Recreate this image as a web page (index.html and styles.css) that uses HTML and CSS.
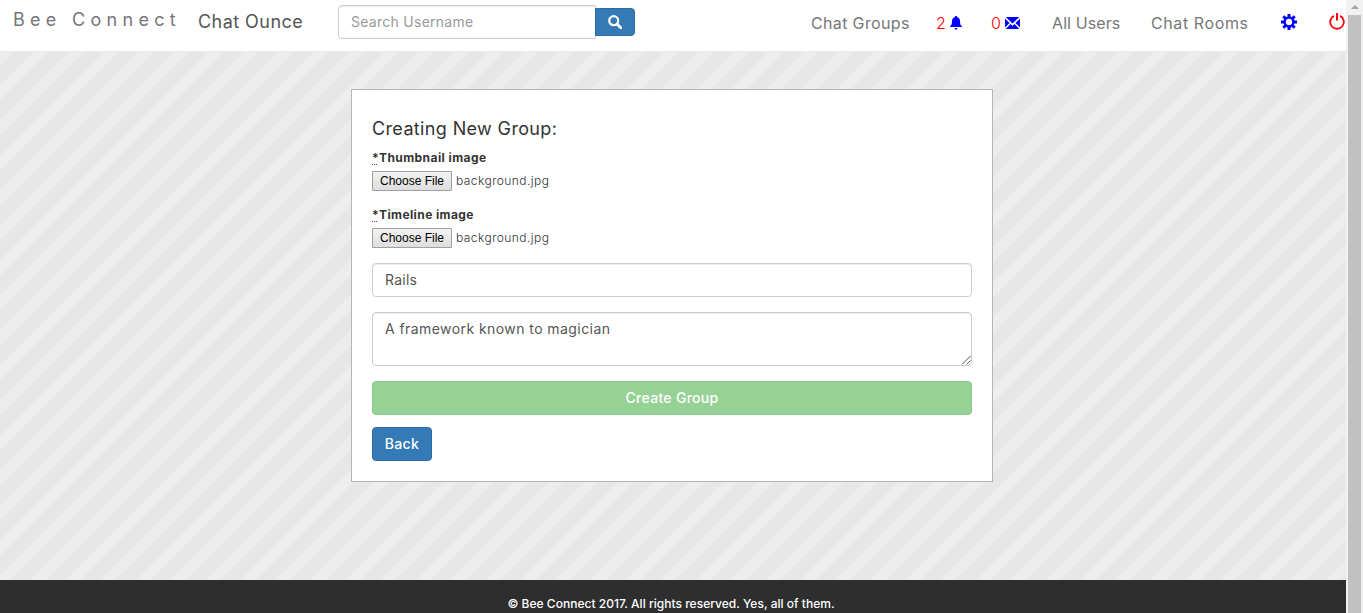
FILE: index.html
```html
<!DOCTYPE html>
<html lang="en">
<head>
<meta charset="utf-8">
<title>Bee Connect</title>
<link rel="stylesheet" href="styles.css">
</head>
<body>
<div class="page">
  <div class="content">
    <nav class="navbar">
      <a class="brand">Bee Connect</a>
      <a class="room">Chat Ounce</a>
      <form class="search">
        <input class="control search-input" type="text" placeholder="Search Username">
        <button class="search-btn" type="button" aria-label="Search">
          <svg width="14" height="14" viewBox="0 0 14 14"><circle cx="5.7" cy="5.7" r="4.5" fill="none" stroke="#fff" stroke-width="2.2"/><path d="M9 9l4 4" stroke="#fff" stroke-width="2.8" stroke-linecap="round"/></svg>
        </button>
      </form>
      <div class="links">
        <a class="link groups">Chat Groups</a>
        <a class="link count alerts"><span>2</span>
          <svg width="12" height="14" viewBox="0 0 12 14"><path fill="#00f" d="M6 0c.8 0 1.200.4 1.200 1.200C9.300 1.800 10 3.300 10 5.200c0 2.800.6 4.100 2 5.300V11H0v-.5c1.400-1.200 2-2.500 2-5.300 0-1.900.7-3.400 2.800-4C4.800.4 5.200 0 6 0zM4.600 12h2.800c-.2 1.200-.7 1.700-1.400 1.700S4.800 13.200 4.600 12z"/></svg>
        </a>
        <a class="link count mail"><span>0</span>
          <svg width="15" height="12" viewBox="0 0 15 12"><path fill="#00f" d="M.7 0h13.600L7.500 6.600zM0 1.400L4.600 6 0 10.500zM15 1.400v9.100L10.400 6zM5.500 6.900l2 1.900 2-1.900 4.800 5.100H.7z"/></svg>
        </a>
        <a class="link users">All Users</a>
        <a class="link rooms">Chat Rooms</a>
        <svg class="gear" width="16" height="16" viewBox="0 0 16 16"><circle cx="8" cy="8" r="4.400" fill="none" stroke="#00f" stroke-width="2.500"/><path stroke="#00f" stroke-width="3" d="M8 0v3M8 13v3M0 8h3M13 8h3M2.300 2.300l2.200 2.200M11.500 11.500l2.200 2.200M2.300 13.700l2.200-2.200M11.500 4.500l2.200-2.200"/></svg>
        <svg class="power" width="16" height="17" viewBox="0 0 16 17"><path fill="none" stroke="red" stroke-width="1.800" d="M4.900 2.900a6.800 6.800 0 1 0 6.200 0"/><path stroke="red" stroke-width="2" d="M8 0v7.500"/></svg>
      </div>
    </nav>
    <main class="card">
      <h1 class="title">Creating New Group:</h1>
      <div class="field">
        <div class="label"><abbr title="required">*</abbr><span class="thumb-label">Thumbnail image</span></div>
        <div class="file"><button class="file-btn" type="button">Choose File</button><span class="file-name">background.jpg</span></div>
      </div>
      <div class="field">
        <div class="label"><abbr title="required">*</abbr><span class="time-label">Timeline image</span></div>
        <div class="file"><button class="file-btn" type="button">Choose File</button><span class="file-name">background.jpg</span></div>
      </div>
      <input class="control name" type="text" value="Rails">
      <div class="area">
        <textarea class="control desc" rows="2">A framework known to magician</textarea>
        <svg class="grip" width="10" height="10" viewBox="0 0 10 10"><path d="M1 9.500L9.500 1M5.500 9.500l4-4" stroke="#555" stroke-width="1" fill="none"/></svg>
      </div>
      <button class="btn create" type="button">Create Group</button>
      <button class="btn back" type="button">Back</button>
    </main>
    <footer class="footer"><span>© Bee Connect 2017. All rights reserved. Yes, all of them.</span></footer>
  </div>
  <div class="scrollbar">
    <div class="arrow"></div>
    <div class="thumb"></div>
  </div>
</div>
</body>
</html>
```
FILE: styles.css
```css
* { box-sizing: border-box; }
body {
  margin: 0;
  overflow: hidden;
  font-family: Inter, "Liberation Sans", sans-serif;
  font-size: 14px;
  color: #333;
}
input, textarea, button { font-family: inherit; margin: 0; }
svg { display: block; flex: none; }
.page { display: flex; height: 613px; }
.content {
  width: 1346px;
  display: flex;
  flex-direction: column;
  background: repeating-linear-gradient(135deg, #e7e7e7 0, #e7e7e7 10.800px, #ededed 10.800px, #ededed 21.400px, #e7e7e7 21.400px, #e7e7e7 24.749px);
}
.navbar {
  height: 52px;
  flex: none;
  display: flex;
  align-items: flex-start;
  background: #fff;
  border-bottom: 1px solid #e9e9e9;
  white-space: nowrap;
}
.brand {
  width: 185px;
  margin-left: 13px;
  padding-top: 9px;
  font-size: 18px;
  line-height: 22px;
  letter-spacing: 5.300px;
  color: #777;
}
.room {
  width: 140px;
  padding-top: 11px;
  font-size: 18px;
  line-height: 22px;
  letter-spacing: .45px;
  color: #555;
}
.search { display: flex; margin-top: 5px; width: 297px; }
.control {
  display: block;
  width: 600px;
  height: 34px;
  padding: 6px 12px;
  border: 1px solid #ccc;
  border-radius: 4px;
  background: #fff;
  box-shadow: inset 0 1px 1px rgba(0,0,0,.075);
  font-size: 14px;
  line-height: 20px;
  color: #555;
}
input.control { padding: 5px 12px 7px; }
.search-input { width: 258px; border-radius: 4px 0 0 4px; letter-spacing: .27px; }
.search-input::placeholder { color: #999; opacity: 1; }
.search-btn {
  width: 40px;
  height: 28px;
  margin: 3px 0 0 -1px;
  padding: 0;
  display: flex;
  align-items: center;
  justify-content: center;
  border: 1px solid #2e6da4;
  border-radius: 0 4px 4px 0;
  background: #337ab7;
}
.links { display: flex; margin: 13px 0 0 176px; height: 20px; }
.link { font-size: 16px; line-height: 20px; color: #777; }
.groups { width: 125px; letter-spacing: .35px; }
.count { display: flex; color: red; font-weight: 300; }
.count span { width: 14px; }
.count svg { margin-top: 3px; }
.alerts { width: 55px; }
.mail { width: 61px; }
.mail svg { margin-top: 4px; }
.users { width: 99px; letter-spacing: .1px; }
.rooms { width: 130px; letter-spacing: .6px; }
.gear { margin-top: 1px; }
.power { margin: 0 0 0 32px; }
.card {
  width: 642px;
  height: 393px;
  margin: 37px 0 0 351px;
  padding: 28px 20px 0;
  background: #fff;
  border: 1px solid #b5b5b5;
}
.title {
  margin: 0;
  font-size: 18px;
  line-height: 22px;
  font-weight: 400;
  letter-spacing: .36px;
}
.field { height: 57px; padding-top: 9px; }
.label { display: flex; font-size: 12px; line-height: 18px; font-weight: 700; }
.label abbr { width: 5px; height: 16px; margin-right: 2px; text-decoration: none; border-bottom: 1px dotted #555; }
.thumb-label { letter-spacing: .43px; }
.time-label { letter-spacing: .4px; }
.file { display: flex; height: 20px; margin-top: 4px; align-items: center; }
.file-btn {
  width: 80px;
  height: 20px;
  padding: 0;
  font: 12px/16px "Liberation Sans", sans-serif;
  letter-spacing: 0;
  color: #000;
  border: 1px solid #a0a0a0;
  border-radius: 1px;
  background: linear-gradient(#f3f3f3, #dedede);
}
.file-name { margin-left: 4px; padding-bottom: 2px; font-size: 12px; font-weight: 300; letter-spacing: .45px; }
.name { margin-top: 9px; letter-spacing: .25px; }
.area { position: relative; margin-top: 15px; }
.desc { height: 54px; resize: none; overflow: hidden; letter-spacing: .43px; }
.grip { position: absolute; right: 1px; bottom: 1px; }
.btn {
  display: block;
  height: 34px;
  padding: 0 0 2px;
  border-radius: 4px;
  border: 1px solid #2e6da4;
  background: #337ab7;
  color: #fff;
  font-size: 14px;
  font-weight: 500;
}
.create { width: 600px; margin-top: 15px; background: #96d296; border-color: #8acb8a; letter-spacing: .3px; }
.back { width: 60px; margin-top: 12px; letter-spacing: .3px; }
.footer {
  margin-top: auto;
  height: 33px;
  padding-top: 15px;
  background: #2e2e2e;
  color: #fff;
  font-size: 12px;
  line-height: 17px;
  text-align: center;
  font-weight: 500;
  white-space: nowrap;
}
.footer span { margin-right: 4px; letter-spacing: .02px; }
.scrollbar { width: 17px; background: #f1f1f1; padding: 5px 2px 0; }
.arrow { width: 0; margin: 0 auto; border: 4px solid transparent; border-top: 0; border-bottom-color: #a3a3a3; }
.thumb { height: 598px; margin-top: 6px; background: #c1c1c1; }
```
